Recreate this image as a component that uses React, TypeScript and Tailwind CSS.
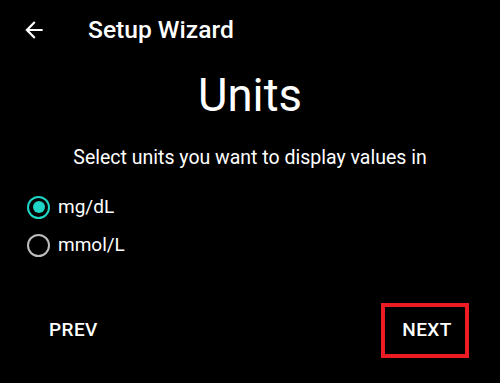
export default function App() {
  return (
    <div className="w-[500px] h-[383px] bg-black text-white flex flex-col" style={{ fontFamily: "Roboto, 'Liberation Sans', sans-serif" }}>
      <header className="h-[60px] flex items-center">
        <button className="ml-[21px] w-[26px] h-[26px] flex items-center justify-center">
          <svg viewBox="0 0 24 24" className="w-[26px] h-[26px]" fill="white">
            <path d="M20 11H7.83l5.59-5.59L12 4l-8 8 8 8 1.41-1.41L7.83 13H20v-2z" />
          </svg>
        </button>
        <h1 className="ml-[41px] text-[24.6px] font-medium leading-none">Setup Wizard</h1>
      </header>

      <h2 className="mt-[8px] text-center text-[45.5px] font-normal leading-[56px]">Units</h2>

      <p className="mt-[22px] text-center text-[19.5px] leading-[24px]">Select units you want to display values in</p>

      <div className="mt-[18px] pl-[27px] flex flex-col">
        <label className="h-[38px] flex items-center gap-[8px]">
          <span className="w-[23px] h-[23px] rounded-full border-[2.5px] border-[#1fd5c5] flex items-center justify-center">
            <span className="w-[12px] h-[12px] rounded-full bg-[#1fd5c5]" />
          </span>
          <span className="text-[19px]">mg/dL</span>
        </label>
        <label className="h-[38px] flex items-center gap-[8px]">
          <span className="w-[23px] h-[23px] rounded-full border-[2.5px] border-[#bdbdbd]" />
          <span className="text-[19px]">mmol/L</span>
        </label>
      </div>

      <div className="mt-auto mb-[25px] flex items-center justify-between pl-[30px] pr-[31px]">
        <button className="h-[55px] px-[19px] text-[19px] font-medium tracking-[0.4px]">PREV</button>
        <button className="h-[55px] w-[88px] pl-[4px] border-4 border-[#ed1c24] text-[19px] font-medium tracking-[0.4px]">NEXT</button>
      </div>
    </div>
  );
}
